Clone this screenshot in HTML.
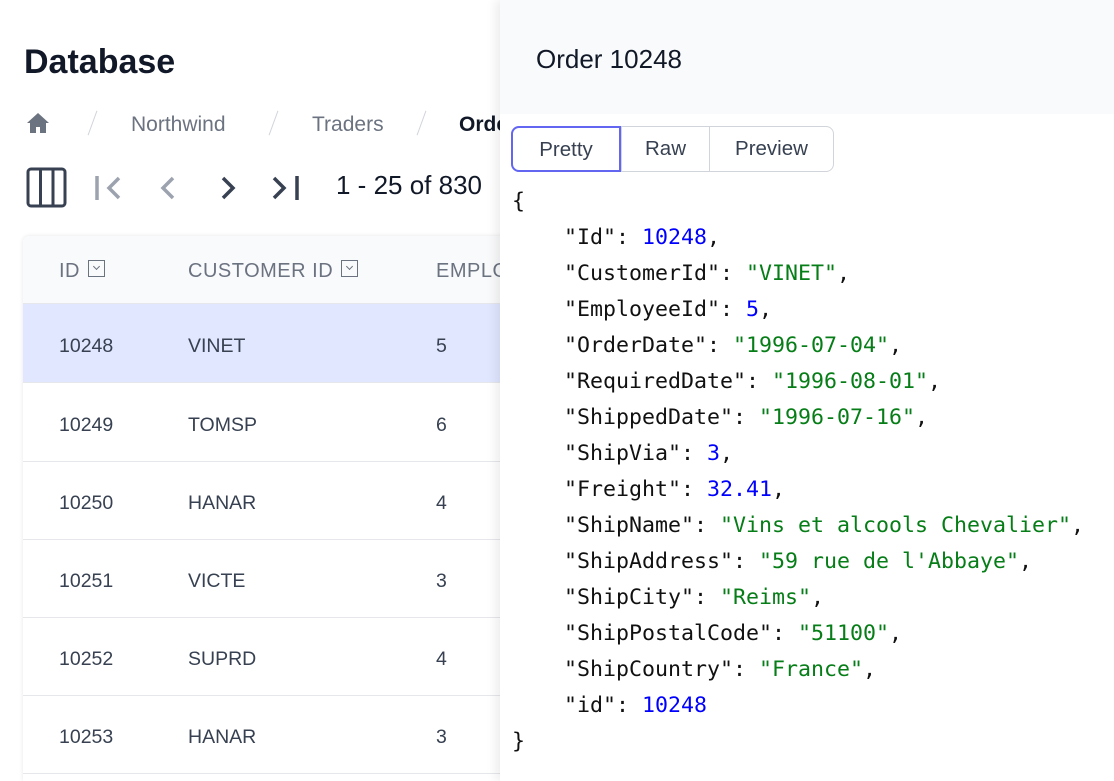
<!DOCTYPE html>
<html><head><meta charset="utf-8"><style>
html,body{margin:0;width:1114px;height:781px;overflow:hidden}
body{background:#fff;font-family:"Liberation Sans",sans-serif;position:relative}
.t{position:absolute;white-space:nowrap}
.h1{left:24px;top:43px;font-size:34px;font-weight:bold;color:#111827}
.bc{top:113px;font-size:21px;color:#6b7280}
.sl{top:110px;width:1px;height:26px;background:#d1d5db;transform:rotate(20deg)}
.tbl{position:absolute;left:23px;top:236px;width:490px;height:545px;background:#fff;box-shadow:0 0 4px rgba(0,0,0,.1);border-radius:6px 0 0 0;overflow:hidden}
.thd{position:absolute;left:0;top:0;width:100%;height:67px;background:#f9fafb;border-bottom:1px solid #e5e7eb}
.th{top:24px;font-size:20px;color:#6b7280;letter-spacing:.5px}
.cb{display:inline-block;width:15px;height:15px;border:1px solid #6b7280;vertical-align:0px;margin-left:8px;position:relative}
.cb:after{content:"";position:absolute;left:5px;top:3px;width:4px;height:4px;border-right:1px solid #6b7280;border-bottom:1px solid #6b7280;transform:rotate(45deg)}
.row{position:absolute;left:0;width:100%;height:78px;border-bottom:1px solid #e5e7eb;font-size:19.5px;color:#374151}
.row span{position:absolute;top:31px}
.panel{position:absolute;left:500px;top:0;width:614px;height:781px;background:#fff;box-shadow:-4px 0 10px rgba(0,0,0,.08)}
.ph{position:absolute;left:0;top:0;width:100%;height:114px;background:#f9fafb}
.code{position:absolute;left:12px;top:184px;font-family:"DejaVu Sans Mono","Liberation Mono",monospace;font-size:21.6px;line-height:36px;color:#111;white-space:pre;margin:0}
.n{color:#0000ff}.s{color:#067d17}
.tabs{position:absolute;left:11px;top:126px;height:44px;border:1px solid #d1d5db;border-radius:8px;display:flex;font-size:20.5px;color:#374151}
.tabs div{text-align:center;line-height:44px;border-left:1px solid #d1d5db}
.tabs div:first-child{border:2px solid #6366f1;border-radius:8px 0 0 8px;margin:-1px 0 -1px -1px;line-height:44px}
</style></head><body>
<div class="t h1">Database</div>
<svg class="t" style="left:26px;top:112px" width="24" height="22" viewBox="0 0 24 22"><path d="M12 1 L1 11 H4 V21 H10 V15 H14 V21 H20 V11 H23 Z" fill="#6b7280"/></svg>
<div class="t sl" style="left:92px"></div>
<div class="t bc" style="left:131px">Northwind</div>
<div class="t sl" style="left:273px"></div>
<div class="t bc" style="left:312px">Traders</div>
<div class="t sl" style="left:421px"></div>
<div class="t bc" style="left:459px;color:#111827;font-weight:bold">Orders</div>
<svg class="t" style="left:26px;top:167px" width="42" height="42" viewBox="0 0 42 42" fill="none" stroke="#374151" stroke-width="3"><rect x="2" y="2" width="37" height="37" rx="3"/><path d="M14.5 2V39M27 2V39"/></svg>
<svg class="t" style="left:92px;top:172px" width="32" height="32" fill="none" stroke="#9ca3af" stroke-width="3.5"><path d="M5 4V28M27 6L17 16L27 26"/></svg>
<svg class="t" style="left:155px;top:172px" width="26" height="32" fill="none" stroke="#9ca3af" stroke-width="3.5"><path d="M18 6L8 16L18 26"/></svg>
<svg class="t" style="left:215px;top:172px" width="26" height="32" fill="none" stroke="#374151" stroke-width="3.5"><path d="M8 6L18 16L8 26"/></svg>
<svg class="t" style="left:270px;top:172px" width="32" height="32" fill="none" stroke="#374151" stroke-width="3.5"><path d="M4 6L14 16L4 26M27 4V28"/></svg>
<div class="t" style="left:336px;top:170px;font-size:26px;color:#111827">1 - 25 of 830</div>
<div class="tbl">
<div class="thd"></div>
<div class="t th" style="left:36px">ID<span class="cb"></span></div>
<div class="t th" style="left:165px">CUSTOMER ID<span class="cb"></span></div>
<div class="t th" style="left:413px">EMPLOYEE</div>
<div class="row" style="top:68px;background:#e0e7ff"><span style="left:36px">10248</span><span style="left:165px">VINET</span><span style="left:413px">5</span></div>
<div class="row" style="top:147px"><span style="left:36px">10249</span><span style="left:165px">TOMSP</span><span style="left:413px">6</span></div>
<div class="row" style="top:225px"><span style="left:36px">10250</span><span style="left:165px">HANAR</span><span style="left:413px">4</span></div>
<div class="row" style="top:303px"><span style="left:36px">10251</span><span style="left:165px">VICTE</span><span style="left:413px">3</span></div>
<div class="row" style="top:381px"><span style="left:36px">10252</span><span style="left:165px">SUPRD</span><span style="left:413px">4</span></div>
<div class="row" style="top:459px"><span style="left:36px">10253</span><span style="left:165px">HANAR</span><span style="left:413px">3</span></div>
</div>
<div class="panel">
<div class="ph"></div>
<div class="t" style="left:36px;top:44px;font-size:26px;color:#111827">Order 10248</div>
<div class="tabs"><div style="width:106px">Pretty</div><div style="width:87px">Raw</div><div style="width:123px">Preview</div></div>
<pre class="code">{
    "Id": <span class="n">10248</span>,
    "CustomerId": <span class="s">"VINET"</span>,
    "EmployeeId": <span class="n">5</span>,
    "OrderDate": <span class="s">"1996-07-04"</span>,
    "RequiredDate": <span class="s">"1996-08-01"</span>,
    "ShippedDate": <span class="s">"1996-07-16"</span>,
    "ShipVia": <span class="n">3</span>,
    "Freight": <span class="n">32.41</span>,
    "ShipName": <span class="s">"Vins et alcools Chevalier"</span>,
    "ShipAddress": <span class="s">"59 rue de l'Abbaye"</span>,
    "ShipCity": <span class="s">"Reims"</span>,
    "ShipPostalCode": <span class="s">"51100"</span>,
    "ShipCountry": <span class="s">"France"</span>,
    "id": <span class="n">10248</span>
}</pre>
</div>
</body></html>
